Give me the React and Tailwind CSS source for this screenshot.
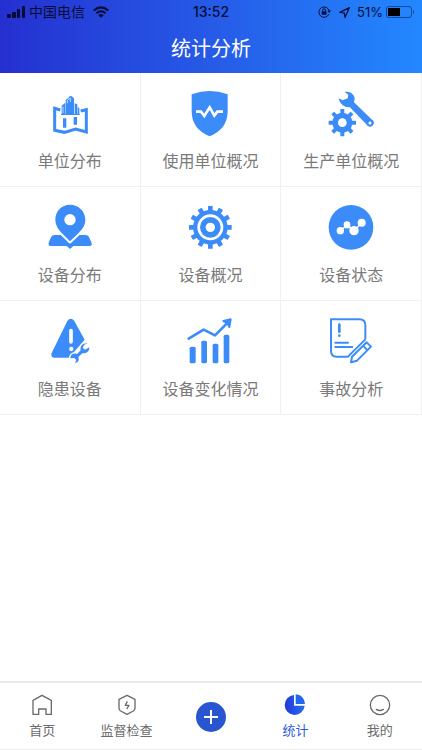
const BLUE = '#3b8cf8';

function Teeth({ cx, cy, count, top, width, height }) {
  return Array.from({ length: count }, (_, i) => (
    <rect
      key={i}
      x={cx - width / 2}
      y={top}
      width={width}
      height={height}
      rx="1.5"
      transform={`rotate(${(360 / count) * i} ${cx} ${cy})`}
    />
  ));
}

function MapIcon() {
  return (
    <>
      <path d="M182 114 L165 109 V175 L194 181 L228 171 L260 180 V113 L243 117" fill="none" stroke={BLUE} strokeWidth="9" />
      <g fill={BLUE}>
        <path d="M186 129 V101 L197 92 V129 Z" />
        <path d="M198 129 V84 L210 74 V129 Z" />
        <path d="M208 129 V74 L214 71 L223 79 V129 Z" />
        <path d="M225 129 V94 L233 97 V129 Z" />
        <path d="M234 129 V105 L239 108 V129 Z" />
        <path d="M184 126 H240 V129 H184 Z" />
        <path d="M190 139 H200 V167 H190 Z M222 135 H232 V158 H222 Z" />
      </g>
      <path d="M190 123 V104 M203 94 V85 L212 78 V90" fill="none" stroke="#fff" strokeWidth="2" />
    </>
  );
}

function ShieldIcon() {
  return (
    <>
      <path d="M156 67 Q184 57 210 57 Q237 57 264 67 V118 C264 156 243 180 210 193 C177 180 156 156 156 118 Z" fill={BLUE} />
      <path d="M169 119 H184 L194 132 L210 106 L224 131 L233 119 H250" fill="none" stroke="#fff" strokeWidth="8" />
    </>
  );
}

function ToolsIcon() {
  return (
    <g fill={BLUE}>
      <path d="M192 60 C205 56 221 65 222 80 L220 91 L274 143 A11 11 0 0 1 262 162 L207 105 C194 108 178 99 174 79 L186 85 L201 79 L203 68 Z" />
      <circle cx="268" cy="153" r="10" />
      <circle cx="268" cy="153" r="4.5" fill="#fff" />
      <circle cx="185" cy="152" r="33" fill="#fff" />
      <circle cx="185" cy="152" r="30" />
      <Teeth cx={185} cy={152} count={8} top={111} width={12} height={16} />
      <circle cx="185" cy="152" r="13" fill="#fff" />
    </g>
  );
}

function PinIcon() {
  return (
    <>
      <path d="M165 147 H258 C263 147 267 150 269 155 L276 171 Q278 180 269 180 H221 L211 189 L201 180 H154 Q145 180 147 170 L154 154 C156 149 160 147 165 147 Z" fill={BLUE} />
      <path d="M211 56 C185 56 167 76 167 101 C167 120 179 133 190 145 L211 166 L233 145 C246 131 257 120 257 101 C257 76 237 56 211 56 Z" fill={BLUE} stroke="#fff" strokeWidth="12" paintOrder="stroke" strokeLinejoin="round" />
      <circle cx="211" cy="101" r="17" fill="#fff" />
    </>
  );
}

function GearIcon() {
  return (
    <g fill={BLUE}>
      <circle cx="212" cy="124" r="52" />
      <Teeth cx={212} cy={124} count={12} top={60} width={14} height={20} />
      <circle cx="212" cy="124" r="35" fill="none" stroke="#fff" strokeWidth="8" />
      <circle cx="212" cy="124" r="14" fill="#fff" />
    </g>
  );
}

function StatusIcon() {
  return (
    <>
      <circle cx="211" cy="124" r="67" fill={BLUE} />
      <path d="M179 134 L199 117 H201 L220 134 L243 111" fill="none" stroke="#fff" strokeWidth="4" />
      <path d="M193 125 H218" stroke="#fff" strokeWidth="4" />
      <g fill="#fff">
        <circle cx="179" cy="134" r="11" />
        <circle cx="199" cy="116" r="10" />
        <circle cx="220" cy="134" r="14" />
        <circle cx="243" cy="110" r="12" />
      </g>
    </>
  );
}

function HazardIcon() {
  return (
    <>
      <path d="M203 63 Q213 49 224 63 L255 119 L208 173 H162 Q152 171 156 159 Z" fill={BLUE} />
      <path
        d="M264 130 L254 134 L249 143 L256 149 L269 142 C270 155 259 162 249 159 L236 171 C240 180 235 188 226 189 L230 180 L224 174 L212 175 C212 163 222 158 232 162 L243 151 C240 138 250 128 264 130 Z"
        fill={BLUE}
        stroke="#fff"
        strokeWidth="8"
        paintOrder="stroke"
      />
      <path d="M214 92 V126" stroke="#fff" strokeWidth="11" strokeLinecap="round" />
      <circle cx="215" cy="147" r="6.5" fill="#fff" />
    </>
  );
}

function TrendIcon() {
  return (
    <>
      <path d="M147 116 L192 89 L226 106 L270 62" fill="none" stroke={BLUE} strokeWidth="8" strokeLinecap="round" strokeLinejoin="round" />
      <path d="M251 63 L273 58 L269 81 L263 69 Z" fill={BLUE} stroke={BLUE} strokeWidth="6" strokeLinejoin="round" />
      <g fill={BLUE}>
        <rect x="150" y="140" width="18" height="50" rx="5" />
        <rect x="185" y="122" width="17" height="68" rx="5" />
        <rect x="219" y="131" width="17" height="59" rx="5" />
        <rect x="252" y="104" width="17" height="86" rx="5" />
      </g>
    </>
  );
}

function ReportIcon() {
  return (
    <g fill="none" stroke={BLUE} strokeWidth="6" strokeLinejoin="round">
      <path d="M254 118 V76 Q254 58 236 58 H151 V152 Q151 170 168 170 H202 L254 118" />
      <path d="M176 74 V95" strokeWidth="8" strokeLinecap="round" />
      <circle cx="176" cy="107" r="4" fill={BLUE} stroke="none" />
      <path d="M164 128 H202 M164 141 H215" strokeLinecap="round" />
      <path d="M258 127 L271 140 L229 182 L211 187 L214 170 Z M247 137 L261 151" />
    </g>
  );
}

const reports = [
  { label: '单位分布', Icon: MapIcon },
  { label: '使用单位概况', Icon: ShieldIcon },
  { label: '生产单位概况', Icon: ToolsIcon },
  { label: '设备分布', Icon: PinIcon },
  { label: '设备概况', Icon: GearIcon },
  { label: '设备状态', Icon: StatusIcon },
  { label: '隐患设备', Icon: HazardIcon },
  { label: '设备变化情况', Icon: TrendIcon },
  { label: '事故分析', Icon: ReportIcon },
];

function StatusBar() {
  return (
    <div className="grid h-6 grid-cols-3 items-center px-[7px] text-[13px] leading-6 text-[#080d35]">
      <div className="flex items-center gap-1">
        <svg className="h-3 w-[18px]" viewBox="0 0 18 12" fill="currentColor" aria-hidden="true">
          <rect x="0" y="8" width="4" height="4" rx="1" />
          <rect x="5" y="6" width="4" height="6" rx="1" />
          <rect x="10" y="3" width="3" height="9" rx="1" />
          <rect x="15" y="0" width="3" height="12" rx="1" />
        </svg>
        <span className="text-sm leading-6">中国电信</span>
        <svg className="ml-1 h-3 w-4" viewBox="0 0 16 12" fill="none" stroke="currentColor" strokeWidth="2" aria-hidden="true">
          <path d="M.8 4.6 Q8 -1.8 15.2 4.6" />
          <path d="M3.4 7.3 Q8 3.2 12.6 7.3" />
          <path d="M5.4 9.2 Q8 7 10.6 9.2 L8 11.8 Z" fill="currentColor" stroke="none" />
        </svg>
      </div>
      <div className="text-center text-sm leading-6 font-medium">13:52</div>
      <div className="flex items-center justify-end">
        <svg className="h-3 w-[13px]" viewBox="0 0 13 12" fill="none" stroke="currentColor" aria-hidden="true">
          <path d="M10.9 8.2 A5.2 5.2 0 1 1 11.2 5" />
          <path d="M9.4 4.6 H13 L11.2 7 Z" fill="currentColor" stroke="none" />
          <rect x="3.7" y="5.3" width="4.8" height="3.4" fill="currentColor" stroke="none" />
          <path d="M4.7 5.5 V4.2 A1.4 1.4 0 0 1 7.5 4.2 V5.5" />
        </svg>
        <svg className="ml-2 h-[11px] w-[11px]" viewBox="0 0 11 11" fill="none" stroke="currentColor" strokeWidth="1.2" strokeLinejoin="round" aria-hidden="true">
          <path d="M10.4 .6 L.8 5.4 L5.2 5.8 L6 10.4 Z" />
        </svg>
        <span className="ml-[7px]">51%</span>
        <svg className="ml-[3px] h-3 w-[29px]" viewBox="0 0 29 12" aria-hidden="true">
          <rect x=".5" y=".5" width="25" height="11" rx="2.5" fill="none" stroke="currentColor" strokeOpacity=".5" />
          <rect x="2" y="2" width="12" height="8" fill="#000" />
          <path d="M27 4 Q29 6 27 8 Z" fill="currentColor" fillOpacity=".6" />
        </svg>
      </div>
    </div>
  );
}

function Tab({ label, active, children }) {
  return (
    <a
      href="#"
      aria-current={active ? 'page' : undefined}
      className={`flex flex-col items-center gap-1 pt-[10px] text-[13px] leading-[18px] ${active ? 'text-[#3059d4]' : 'text-[#6b6b6b]'}`}
    >
      {children}
      <span>{label}</span>
    </a>
  );
}

export default function App() {
  return (
    <div className="flex min-h-screen flex-col bg-white font-['Inter','Noto_Sans_CJK_SC',sans-serif]">
      <header className="h-[73px] bg-linear-to-r from-[#252fd0] via-[#265ae7] to-[#2388ff]">
        <StatusBar />
        <h1 className="text-center text-xl leading-[50px] font-normal text-white">统计分析</h1>
      </header>

      <main className="flex-1">
        <div className="grid grid-cols-3">
          {reports.map(({ label, Icon }) => (
            <button
              key={label}
              type="button"
              className="flex h-[114px] flex-col items-center gap-3 border-r border-b border-[#f0f0f0] pt-4 text-base leading-6 text-[#7a7a7a]"
            >
              <svg className="h-12 w-12" viewBox="139 51 144 144" aria-hidden="true">
                <Icon />
              </svg>
              <span>{label}</span>
            </button>
          ))}
        </div>
      </main>

      <nav className="grid h-[69px] grid-cols-5 border-t-2 border-b border-[#ebebeb]">
        <Tab label="首页">
          <svg className="h-6 w-6" viewBox="91 54 72 72" fill="none" stroke="currentColor" strokeWidth="4" aria-hidden="true">
            <path d="M100 118 V76 L127 61 L155 76 V118 H139 V102 H117 V118 Z" />
          </svg>
        </Tab>
        <Tab label="监督检查">
          <svg className="h-6 w-6" viewBox="344 54 72 72" fill="none" stroke="currentColor" strokeWidth="4" strokeLinejoin="round" aria-hidden="true">
            <path d="M380 61 L404 73 V99 Q404 105 399 108 L380 118 L361 108 Q356 105 356 99 V73 Z" />
            <path d="M381 79 L375 91 H386 L379 102" />
          </svg>
        </Tab>
        <div className="flex items-center justify-center pt-px">
          <button type="button" aria-label="新增" className="flex h-[30px] w-[30px] items-center justify-center rounded-full bg-[#2a55d0]">
            <svg className="h-4 w-4" viewBox="0 0 16 16" stroke="#fff" strokeWidth="2" aria-hidden="true">
              <path d="M8 1 V15 M1 8 H15" />
            </svg>
          </button>
        </div>
        <Tab label="统计" active>
          <svg className="h-6 w-6" viewBox="850 54 72 72" aria-hidden="true">
            <defs>
              <linearGradient id="pie" x1="0" x2="1" y1="0" y2="0">
                <stop offset="0" stopColor="#2437d8" />
                <stop offset="1" stopColor="#2370f5" />
              </linearGradient>
            </defs>
            <path d="M883 60 A30 30 0 1 0 915 92 H883 Z" fill="url(#pie)" />
            <path d="M888 58 Q913 60 916 87 H888 Z" fill="#2467ef" />
          </svg>
        </Tab>
        <Tab label="我的">
          <svg className="h-6 w-6" viewBox="1103 54 72 72" fill="none" stroke="currentColor" strokeWidth="4" aria-hidden="true">
            <circle cx="1139" cy="90" r="29" />
            <path d="M1128 103 Q1138 110 1149 103" strokeLinecap="round" />
          </svg>
        </Tab>
      </nav>
    </div>
  );
}
